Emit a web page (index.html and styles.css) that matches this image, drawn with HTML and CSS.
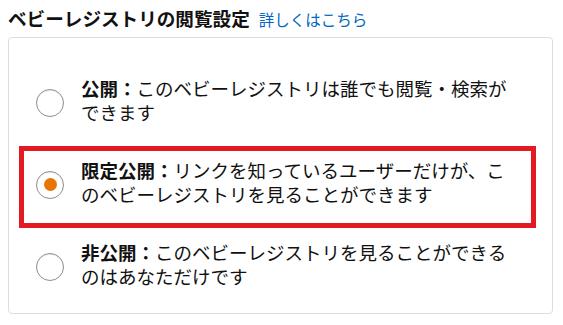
FILE: index.html
```html
<!DOCTYPE html>
<html lang="ja">
<head>
<meta charset="utf-8">
<link rel="stylesheet" href="styles.css">
</head>
<body>
<div class="page">
  <div class="header">
    <h2 class="title">ベビーレジストリの閲覧設定</h2>
    <a class="link" href="#">詳しくはこちら</a>
  </div>
  <div class="card">
    <div class="option">
      <span class="radio"></span>
      <p class="label"><b>公開：</b>このベビーレジストリは誰でも閲覧・検索ができます</p>
    </div>
    <div class="option selected">
      <span class="radio checked"></span>
      <p class="label"><b>限定公開：</b>リンクを知っているユーザーだけが、このベビーレジストリを見ることができます</p>
    </div>
    <div class="option">
      <span class="radio"></span>
      <p class="label"><b>非公開：</b>このベビーレジストリを見ることができるのはあなただけです</p>
    </div>
  </div>
</div>
</body>
</html>
```

FILE: styles.css
```css
html, body {
  margin: 0;
  padding: 0;
  background: #fff;
}
body {
  font-family: "Noto Sans CJK JP", "Noto Sans", sans-serif;
  color: #111;
}
.page {
  padding: 6px 10px 0 8px;
}
.header {
  display: flex;
  align-items: baseline;
  gap: 9px;
  height: 24px;
  margin-bottom: 7px;
}
.title {
  margin: 0;
  font-size: 18.6px;
  line-height: 24px;
  font-weight: 700;
  color: #111;
}
.link {
  font-size: 15.5px;
  line-height: 24px;
  color: #0066c0;
  text-decoration: none;
}
.card {
  border: 1px solid #dddddd;
  border-radius: 4px;
  padding: 26px 16px 3px 10px;
}
.option {
  display: flex;
  align-items: center;
  gap: 17px;
  border: 5px solid transparent;
  padding: 7px 12px 17px 12px;
}
.option.selected {
  border-color: #e31a22;
}
.radio {
  flex: none;
  width: 28px;
  height: 28px;
  box-sizing: border-box;
  border-radius: 50%;
  border: 1.5px solid #8e8e8e;
  background: #fff;
  margin-top: 5px;
  display: flex;
  align-items: center;
  justify-content: center;
  box-shadow: inset 0 1px 1px rgba(0,0,0,0.08);
}
.radio.checked::after {
  content: "";
  width: 13px;
  height: 13px;
  border-radius: 50%;
  background: #e77600;
}
.label {
  margin: 0;
  font-size: 18.5px;
  line-height: 24px;
  flex: 1;
}
.label b {
  font-weight: 700;
}
```
